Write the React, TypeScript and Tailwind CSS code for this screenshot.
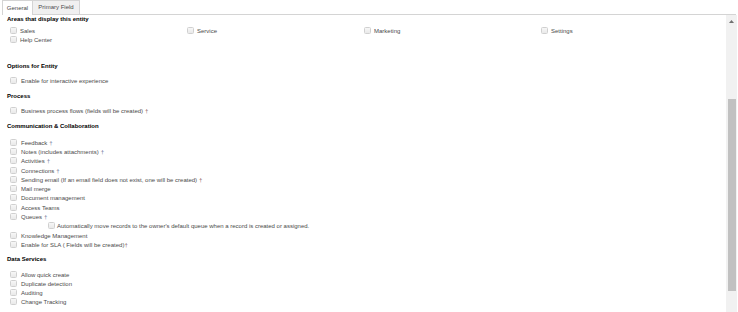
import React from "react";

type Item = { label: string; mark?: "blue" | "red"; indent?: boolean };

const areas = ["Sales", "Service", "Marketing", "Settings", "Help Center"];

const communication: Item[] = [
  { label: "Feedback", mark: "blue" },
  { label: "Notes (includes attachments)", mark: "blue" },
  { label: "Activities", mark: "blue" },
  { label: "Connections", mark: "blue" },
  { label: "Sending email (If an email field does not exist, one will be created)", mark: "red" },
  { label: "Mail merge" },
  { label: "Document management" },
  { label: "Access Teams" },
  { label: "Queues", mark: "blue" },
  {
    label: "Automatically move records to the owner's default queue when a record is created or assigned.",
    indent: true,
  },
  { label: "Knowledge Management" },
  { label: "Enable for SLA ( Fields will be created)", mark: "red" },
];

const dataServices = ["Allow quick create", "Duplicate detection", "Auditing", "Change Tracking"];

function Box() {
  return (
    <span className="inline-block w-[7px] h-[7px] shrink-0 -translate-y-[1px] rounded-[1.5px] border border-[#d0d0d0] bg-[linear-gradient(to_bottom,#f7f7f7,#e9e9e9)]" />
  );
}

function Check({ item, h = "h-[9.3px]" }: { item: Item; h?: string }) {
  return (
    <div className={`${h} flex items-center ${item.indent ? "pl-[48px]" : "pl-[10px]"}`}>
      <Box />
      <span className={`${item.indent ? "ml-[2px]" : "ml-[4px]"} whitespace-nowrap text-[#4a4a4a]`}>
        {item.label}
        {item.mark === "blue" && <span className="ml-[2px] text-[#6a7396]">†</span>}
        {item.mark === "red" && (
          <span className={item.label.startsWith("Enable") ? "text-[#8a5a5a]" : "ml-[2px] text-[#8a5a5a]"}>
            †
          </span>
        )}
      </span>
    </div>
  );
}

function Heading({ children, className = "" }: { children: React.ReactNode; className?: string }) {
  return (
    <div className={`h-[8px] leading-[8px] pl-[7px] font-bold text-black ${className}`}>{children}</div>
  );
}

export default function App() {
  return (
    <div
      className="w-[738px] h-[312px] overflow-hidden bg-white text-[6px] flex flex-col"
      style={{ fontFamily: '"Liberation Sans", Arial, sans-serif' }}
    >
      {/* tabs */}
      <div className="h-[15px] shrink-0 flex items-end pl-[2px] pr-[2px]">
        <div className="flex items-end h-full">
          <div className="h-[15px] w-[31px] border border-b-0 border-[#d4d4d4] bg-white flex items-center justify-center text-[#4a4a4a]">
            General
          </div>
          <div className="h-[15px] w-[47px] border border-l-0 border-[#d4d4d4] bg-[#f0f0f0] flex items-center justify-center text-[#4a4a4a]">
            Primary Field
          </div>
        </div>
        <div className="flex-1 h-px bg-[#d4d4d4]" />
      </div>

      <div className="flex flex-1 min-h-0">
        <div className="flex-1 min-w-0">
          <Heading>Areas that display this entity</Heading>
          <div className="mt-[4px] grid grid-cols-[177px_177px_177px_177px]">
            {areas.map((a) => (
              <div key={a} className="h-[9px] flex items-center pl-[10px]">
                <Box />
                <span className="ml-[3px] text-[#4a4a4a]">{a}</span>
              </div>
            ))}
          </div>

          <Heading className="mt-[17px]">Options for Entity</Heading>
          <div className="mt-[6.5px]">
            <Check item={{ label: "Enable for interactive experience" }} h="h-[9px]" />
          </div>

          <Heading className="mt-[6.5px]">Process</Heading>
          <div className="mt-[6.5px]">
            <Check item={{ label: "Business process flows (fields will be created)", mark: "red" }} h="h-[9px]" />
          </div>

          <Heading className="mt-[6.5px]">Communication &amp; Collaboration</Heading>
          <div className="mt-[8.5px]">
            {communication.map((c) => (
              <Check key={c.label} item={c} />
            ))}
          </div>

          <Heading className="mt-[5px]">Data Services</Heading>
          <div className="mt-[7.5px]">
            {dataServices.map((d) => (
              <Check key={d} item={{ label: d }} h="h-[9px]" />
            ))}
          </div>
        </div>

        {/* scrollbar */}
        <div className="w-[11px] mr-[1px] shrink-0 bg-[#f1f1f1] flex flex-col items-center">
          <div className="h-[12px] w-full flex items-center justify-center">
            <svg width="5" height="3" viewBox="0 0 5 3">
              <path d="M2.5 0 L5 3 L0 3 Z" fill="#707070" />
            </svg>
          </div>
          <div className="mt-[72px] w-[8px] h-[192px] bg-[#c1c1c1]" />
        </div>
      </div>
    </div>
  );
}
